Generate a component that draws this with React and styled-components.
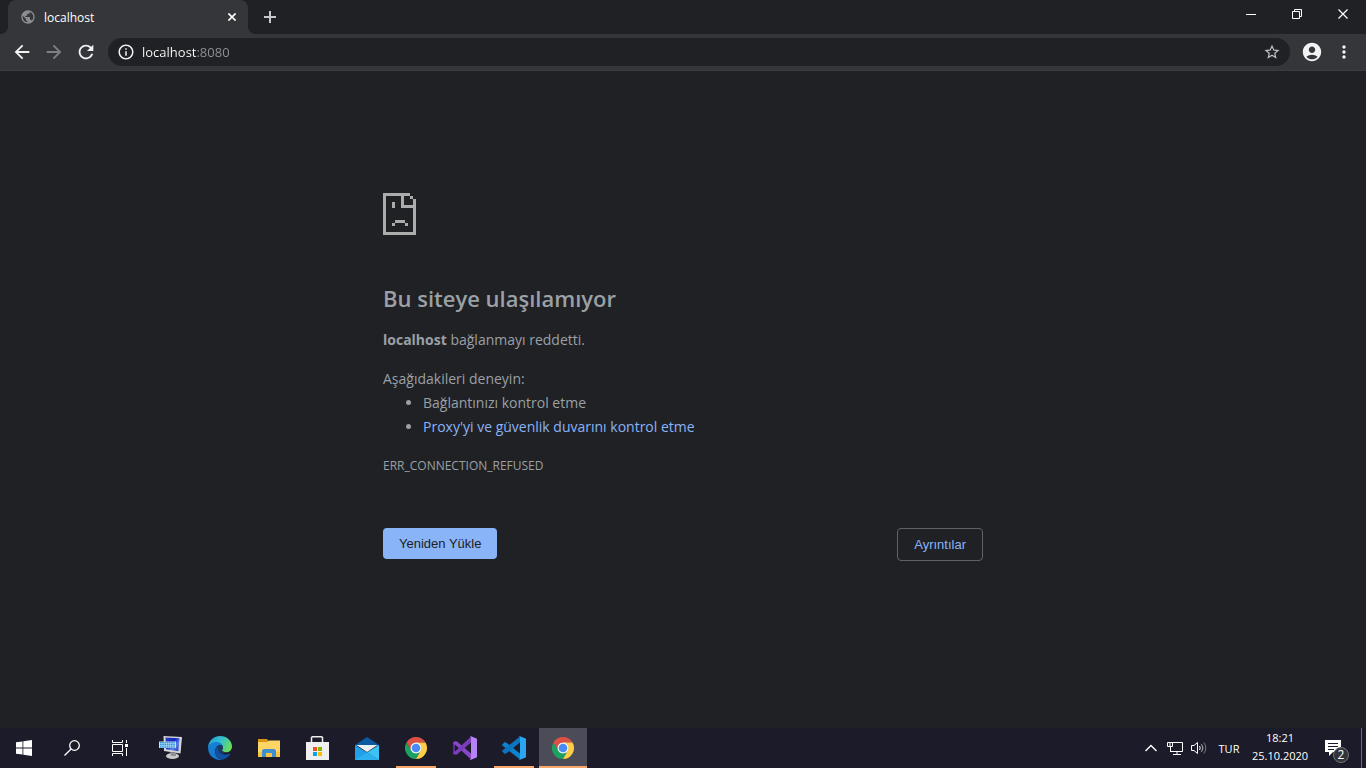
import React, { useState } from 'react'
import styled, { createGlobalStyle, css } from 'styled-components'
import {
  MdArrowBack,
  MdArrowForward,
  MdRefresh,
  MdInfoOutline,
  MdStarBorder,
  MdAccountCircle,
  MdMoreVert,
  MdPublic
} from 'react-icons/md'

const GlobalStyle = createGlobalStyle`
  * {
    box-sizing: border-box;
  }

  body {
    margin: 0;
    background: #202124;
    font-family: "Open Sans", "Noto Sans", sans-serif;
  }

  button,
  input {
    font-family: inherit;
  }
`

const Screen = styled.div`
  display: flex;
  flex-direction: column;
  min-height: 100vh;
`

const plainButton = css`
  display: flex;
  align-items: center;
  justify-content: center;
  padding: 0;
  border: 0;
  background: none;
  color: #fff;
`

/* tab strip */

const TabStrip = styled.header`
  display: flex;
  height: 34px;
  padding-left: 8px;
  background: #202124;
`

const Tab = styled.div`
  position: relative;
  display: flex;
  align-items: center;
  width: 240px;
  padding: 0 8px 0 12px;
  border-radius: 8px 8px 0 0;
  background: #35363a;
  color: #fff;
  font-size: 12px;

  &::before,
  &::after {
    content: "";
    position: absolute;
    bottom: 0;
    width: 8px;
    height: 8px;
  }
  &::before {
    right: 100%;
    background: radial-gradient(circle at 0 0, transparent 8px, #35363a 8px);
  }
  &::after {
    left: 100%;
    background: radial-gradient(circle at 100% 0, transparent 8px, #35363a 8px);
  }
`

const Favicon = styled(MdPublic)`
  width: 16px;
  height: 16px;
  margin-right: 8px;
  color: #8c8d8f;
`

const TabTitle = styled.span`
  flex: 1;
`

const TabClose = styled.button`
  ${plainButton}
  width: 16px;
  height: 16px;
`

const NewTab = styled.button`
  ${plainButton}
  width: 28px;
  margin-left: 8px;
  color: #c6c8cc;
`

const WindowControls = styled.div`
  display: flex;
  height: 28px;
  margin-left: auto;
`

const WindowButton = styled.button`
  ${plainButton}
  width: 46px;
`

/* toolbar */

const Toolbar = styled.nav`
  display: flex;
  align-items: center;
  height: 37px;
  padding: 0 6px;
  border-bottom: 1px solid #3c3d41;
  background: #35363a;
`

const ToolButton = styled.button`
  ${plainButton}
  width: 32px;
  height: 32px;
  color: ${props => props.disabled ? '#7f8083' : '#f1f3f4'};
`

const Omnibox = styled.div`
  display: flex;
  flex: 1;
  align-items: center;
  height: 28px;
  margin: 0 6px;
  padding: 0 8px;
  border-radius: 14px;
  background: #202124;
`

const OmniboxButton = styled.button`
  ${plainButton}
  width: 20px;
  height: 20px;
  color: ${props => props.$muted ? '#bdc1c6' : '#f1f3f4'};
`

// the host part is bright, the port after it is dimmed
const Address = styled.input`
  flex: 1;
  min-width: 0;
  margin-left: 6px;
  padding: 0;
  border: 0;
  outline: 0;
  background: linear-gradient(to right, #fff 55px, #8f9398 55px);
  background-clip: text;
  color: transparent;
  caret-color: #fff;
  font-size: 13px;
  line-height: 20px;
`

/* error page */

const Page = styled.main`
  flex: 1;
  width: 100%;
  max-width: 600px;
  margin: 0 auto;
  padding-top: 122px;
  color: #9aa0a6;
  font-size: 14px;
  line-height: 24px;

  p {
    margin: 0 0 15px;
  }
  ul {
    margin: 0 0 15px;
    padding-left: 40px;
  }
  a {
    color: #8ab4f8;
    text-decoration: none;
  }
`

const Heading = styled.h1`
  margin: 47px 0 14px;
  font-size: 22px;
  font-weight: 600;
  line-height: 32px;
`

const Intro = styled.div`
  color: inherit;
`

const ErrorCode = styled.div`
  font-size: 12px;
`

const Actions = styled.div`
  display: flex;
  align-items: flex-start;
  justify-content: space-between;
  margin-top: 50px;
`

const PageButton = styled.button`
  padding: 8px 16px;
  border: 0;
  border-radius: 4px;
  background: #8ab4f8;
  color: #202124;
  font-family: "Liberation Sans", Arial, sans-serif;
  font-size: 13px;
  line-height: 15px;

  ${props => props.$outlined && css`
    border: 1px solid #5f6368;
    background: transparent;
    color: #8ab4f8;
  `}
`

/* taskbar */

const Taskbar = styled.footer`
  display: flex;
  height: 40px;
  background: #1c1b29;
  color: #fff;
`

const TaskButton = styled.button`
  ${plainButton}
  width: 48px;
`

const Apps = styled.div`
  display: flex;
  gap: 1px;
  margin-left: 3px;
`

const AppButton = styled.button`
  ${plainButton}
  position: relative;
  width: 48px;
  background: ${props => props.$active ? '#4c4c58' : 'none'};

  ${props => props.$running && css`
    &::after {
      content: "";
      position: absolute;
      right: ${props.$active ? 0 : '4px'};
      bottom: 0;
      left: ${props.$active ? 0 : '4px'};
      height: 2px;
      background: #f7a76c;
    }
  `}
`

const Tray = styled.div`
  display: flex;
  margin-left: auto;
`

const TrayButton = styled.button`
  ${plainButton}
  width: 24px;
`

const Language = styled.button`
  ${plainButton}
  width: 36px;
  font-size: 11px;
`

const Clock = styled.button`
  ${plainButton}
  flex-direction: column;
  width: 66px;
  padding-bottom: 2px;
  font-size: 11px;
  line-height: 18px;
`

const Notifications = styled.button`
  ${plainButton}
  position: relative;
  width: 48px;
  padding-right: 8px;
`

const Badge = styled.span`
  position: absolute;
  right: 12px;
  bottom: 5px;
  width: 16px;
  height: 16px;
  border: 1px solid #75757c;
  border-radius: 50%;
  background: #33333a;
  font-size: 12px;
  line-height: 14px;
  text-align: center;
`

const ShowDesktop = styled.button`
  ${plainButton}
  width: 5px;
  border-left: 1px solid #6c6b76;
`

const CloseIcon = ({ size, stroke }) => (
  <svg width={size} height={size} viewBox="0 0 10 10" stroke="currentColor" strokeWidth={stroke}>
    <path d="M.5.5l9 9M9.5.5l-9 9" />
  </svg>
)

const PlusIcon = () => (
  <svg width="12" height="12" viewBox="0 0 12 12" fill="currentColor">
    <path d="M5 0h2v5h5v2H7v5H5V7H0V5h5z" />
  </svg>
)

const MinimizeIcon = () => (
  <svg width="10" height="10" viewBox="0 0 10 10" fill="currentColor">
    <path d="M0 5h10v1H0z" />
  </svg>
)

const RestoreIcon = () => (
  <svg width="10" height="10" viewBox="0 0 10 10" fill="none" stroke="currentColor">
    <path d="M.5 2.5h7v7h-7zM2.5 2.5v-2h7v7h-2" />
  </svg>
)

const SadPageIcon = () => (
  <svg width="33" height="42" viewBox="0 0 33 42" fill="#acacac" shapeRendering="crispEdges" display="block">
    <path d="M0 0h27v3h3v3h3v36H0zM3 3v36h27V15H18V3zM21 3v9h9V6h-3V3z" fillRule="evenodd" />
    <path d="M9 9h3v6H9zM12 27h10v3H12zM9 30h3v3H9zM22 30h3v3h-3z" />
  </svg>
)

const WindowsIcon = () => (
  <svg width="16" height="16" viewBox="0 0 16 16" fill="currentColor">
    <path d="M0 2.3l6.5-.9v6.1H0zM7.3 1.2L16 0v7.5H7.3zM0 8.4h6.5v6.2L0 13.7zM7.3 8.4H16V16l-8.7-1.2z" />
  </svg>
)

const SearchIcon = () => (
  <svg width="16" height="16" viewBox="0 0 16 16" fill="none" stroke="currentColor" strokeWidth="1.3">
    <circle cx="10.5" cy="5.5" r="4.8" />
    <path d="M7.1 9L.5 15.5" />
  </svg>
)

const TaskViewIcon = () => (
  <svg width="16" height="16" viewBox="0 0 16 16" fill="none" stroke="currentColor">
    <path d="M.5 0v2.5h10V0M.5 16v-2.5h10V16M14.5 0v3M14.5 8v8" />
    <path d="M.5 4.5h10v7H.5z" />
    <path d="M13 4h3v3h-3z" fill="currentColor" stroke="none" />
  </svg>
)

const RemoteKeyboardIcon = () => (
  <svg width="24" height="24" viewBox="0 0 24 24">
    <defs>
      <linearGradient id="remoteScreen" x1="0" x2="1" y1="0" y2="1">
        <stop offset="0" stopColor="#2a3fc0" />
        <stop offset=".4" stopColor="#1226c4" />
        <stop offset=".65" stopColor="#5b7fe8" />
        <stop offset="1" stopColor="#1a35b8" />
      </linearGradient>
    </defs>
    <ellipse cx="13.500" cy="20" rx="6.500" ry="3" fill="#c9cbcb" />
    <path d="M11 16l6 1v3h-5z" fill="#8e9294" />
    <path d="M4.500 0L23 1l-1.500 16.500L5 15z" fill="#d3d6d4" />
    <path d="M6.500 1.500l14 .8-1.200 13L7 13.300z" fill="url(#remoteScreen)" />
    <path d="M0 5.500h17v6.500H0z" fill="#bfe2f6" />
    <path d="M1 6.700h15M1 8.800h15M1 10.900h15" stroke="#3a98dc" strokeWidth="1.500" strokeDasharray="1.700 .5" />
  </svg>
)

const EdgeIcon = () => (
  <svg width="24" height="24" viewBox="0 0 24 24">
    <defs>
      <linearGradient id="edgeTop" x1="0" x2="1" y1=".2" y2=".6">
        <stop offset="0" stopColor="#1f9fe0" />
        <stop offset=".5" stopColor="#33c0cc" />
        <stop offset="1" stopColor="#6be055" />
      </linearGradient>
      <linearGradient id="edgeLeft" x1="0" x2=".6" y1="0" y2="1">
        <stop offset="0" stopColor="#1783d4" />
        <stop offset="1" stopColor="#1377cc" />
      </linearGradient>
    </defs>
    <path d="M12 0c7 0 12 5 12 10.500 0 3.500-2.800 5.800-6 5.800-2.700 0-4-1.100-4-2 0-.6.900-.9.900-2.600C14.900 9 12 7.300 8.700 7.300 4.500 7.300 1 9.500.1 12 .1 5.300 5.300 0 12 0z" fill="url(#edgeTop)" />
    <path d="M.1 12C.7 8 4.500 6 8.300 6c4 0 6.600 2.400 6.600 5.200-.3-1.300-1.500-2.100-3-2.100-2.800 0-4.800 3.100-4.800 6.300 0 4.400 3.200 7.900 7.200 8.300C6.500 25.100.1 19.300.1 12z" fill="url(#edgeLeft)" />
    <path d="M11.900 9.100c-2.900 1.200-4.800 3.600-4.800 6.700 0 4.200 3.300 7.700 7.200 7.900 3.200-.6 6.200-2.700 7.900-5.500.3-.5-.2-.9-.7-.6-1.200.6-2.500.9-4.100.9-4 0-7.300-2.700-7.300-6 0-1.500.7-2.700 1.800-3.400z" fill="#1450a0" />
    <path d="M11.900 9.100c1.700 0 2.900 1 3 2.500 0 1.500-.9 2-.9 2.700 0 .9 1.300 2 4 2l-3 1.500c-3-.5-5-2.500-5-5.300 0-1.500.7-2.700 1.900-3.400z" fill="#173a66" />
  </svg>
)

const ExplorerIcon = () => (
  <svg width="22" height="18" viewBox="0 0 22 18">
    <path d="M0 0h9l1.500 2L9 4H0z" fill="#dc9512" />
    <path d="M0 3h9l2-1.500h11V18H0z" fill="#ffd666" />
    <path d="M0 13h22v5H0z" fill="#f7c445" />
    <path d="M4 18v-6.500L5.500 10h11l1.500 1.500V18h-4v-4H8v4z" fill="#3e8fd0" />
  </svg>
)

const StoreIcon = () => (
  <svg width="24" height="24" viewBox="0 0 24 24">
    <path d="M5.500 7V1.500l1-.7h9l1 .7V7" fill="none" stroke="#eee" strokeWidth="1.500" />
    <path d="M0 6h23v18H0z" fill="#efefef" />
    <path d="M7 11h4v4H7z" fill="#f25022" />
    <path d="M12 11h4v4h-4z" fill="#7fba00" />
    <path d="M7 16h4v4H7z" fill="#00a4ef" />
    <path d="M12 16h4v4h-4z" fill="#ffb900" />
  </svg>
)

const MailIcon = () => (
  <svg width="24" height="23" viewBox="0 0 24 23">
    <path d="M0 8L12 0l12 8v1H0z" fill="#0c59a4" />
    <path d="M0 8l24 15H0z" fill="#229fe9" />
    <path d="M24 8v15L12 15.500z" fill="#3cc2f6" />
    <path d="M0 23l12-7.500L24 23z" fill="#2bb0f0" />
    <path d="M1.500 8h21L12 15z" fill="#eef1f3" />
  </svg>
)

const ChromeIcon = () => (
  <svg width="24" height="24" viewBox="0 0 24 24">
    <circle cx="12" cy="12" r="6" fill="#f4f6fa" />
    <path d="M2.470 6.500A11 11 0 0 1 21.530 6.500H12A5.500 5.500 0 0 0 7.240 14.750z" fill="#dd5144" />
    <path d="M2.470 6.500L7.240 14.750A5.500 5.500 0 0 0 16.760 14.750L12 23A11 11 0 0 1 2.470 6.500z" fill="#1ba261" />
    <path d="M21.530 6.500A11 11 0 0 1 12 23L16.760 14.750A5.500 5.500 0 0 0 12 6.500z" fill="#ffcd46" />
    <circle cx="12" cy="12" r="4.300" fill="#4a8af4" />
  </svg>
)

const VisualStudioIcon = () => (
  <svg width="24" height="24" viewBox="0 0 24 24">
    <path d="M0 6.300L2 5.300v13.400l-2-1z" fill="#5c2a96" />
    <path d="M0 6.300L2.500 5.200 4 5.600 18 17.500V23.500L2 8.500v2z" fill="#8a46c9" />
    <path d="M0 17.700l2.500 1.100 1.500-.4L18 6.500V.5L2 15.500v-2z" fill="#7a3cba" />
    <path d="M17.500 0L24 2.800v18.400L17.500 24l-1-.7c1 .3 1.500-.2 1.500-1V1.700c0-.8-.6-1.400-1.500-1z" fill="#b583f3" />
  </svg>
)

const VsCodeIcon = () => (
  <svg width="24" height="24" viewBox="0 0 24 24">
    <path d="M.3 8.500l2.200-2.200h1.300L18 17.500V23.500L.3 9.500z" fill="#0d83cf" />
    <path d="M.3 15.500l2.200 2.200h1.300L18 6.500V.5L.3 14.500z" fill="#0d74bd" />
    <path d="M17.500 0L24 2.800v18.400L17.500 24l-1-.6c1 .4 1.500-.2 1.500-1V1.600c0-.8-.6-1.400-1.500-1z" fill="#2aa5f1" />
  </svg>
)

const ChevronIcon = () => (
  <svg width="12" height="8" viewBox="0 0 12 8" fill="none" stroke="currentColor" strokeWidth="1.400">
    <path d="M.5 7L6 1.500 11.500 7" />
  </svg>
)

const NetworkIcon = () => (
  <svg width="16" height="16" viewBox="0 0 16 16" fill="none" stroke="currentColor">
    <path d="M5 2.500h10.500v9H3.500M3.500 7v5M6 14.500h8M10 12v2.500M.5 2.500h5v4h-5zM3 3v3" />
  </svg>
)

const VolumeIcon = () => (
  <svg width="16" height="14" viewBox="0 0 16 14" fill="none" stroke="currentColor">
    <path d="M.5 4.500h2.500l3.500-3v11L3 9.500H.5z" />
    <path d="M8.500 5q1.500 2 0 4" />
    <path d="M10.500 3.300q3 3.700 0 7.400" opacity=".7" />
    <path d="M12.800 1.500q4 5.500 0 11" opacity=".4" />
  </svg>
)

const MessageIcon = () => (
  <svg width="16" height="16" viewBox="0 0 16 16">
    <path d="M0 0h16v12H8l-4 4v-4H0z" fill="#fff" />
    <path d="M3 3.500h10M3 6.500h10M3 9.500h6" stroke="#1c1b29" />
  </svg>
)

const apps = [
  { name: 'Uzak Klavye', icon: RemoteKeyboardIcon },
  { name: 'Microsoft Edge', icon: EdgeIcon },
  { name: 'Dosya Gezgini', icon: ExplorerIcon },
  { name: 'Microsoft Store', icon: StoreIcon },
  { name: 'Posta', icon: MailIcon },
  { name: 'Google Chrome', icon: ChromeIcon, running: true },
  { name: 'Visual Studio', icon: VisualStudioIcon },
  { name: 'Visual Studio Code', icon: VsCodeIcon, running: true },
  { name: 'localhost - Google Chrome', icon: ChromeIcon, running: true, active: true }
]

const App = () => {
  const [address, setAddress] = useState('localhost:8080')

  return (
    <Screen>
      <GlobalStyle />

      <TabStrip>
        <Tab>
          <Favicon />
          <TabTitle>localhost</TabTitle>
          <TabClose aria-label="Sekmeyi kapat"><CloseIcon size={8} stroke={2} /></TabClose>
        </Tab>
        <NewTab aria-label="Yeni sekme"><PlusIcon /></NewTab>
        <WindowControls>
          <WindowButton aria-label="Simge durumuna küçült"><MinimizeIcon /></WindowButton>
          <WindowButton aria-label="Geri yükle"><RestoreIcon /></WindowButton>
          <WindowButton aria-label="Kapat"><CloseIcon size={10} stroke={1.2} /></WindowButton>
        </WindowControls>
      </TabStrip>

      <Toolbar>
        <ToolButton aria-label="Geri"><MdArrowBack size={22} /></ToolButton>
        <ToolButton aria-label="İleri" disabled><MdArrowForward size={22} /></ToolButton>
        <ToolButton aria-label="Yenile"><MdRefresh size={22} /></ToolButton>
        <Omnibox>
          <OmniboxButton aria-label="Site bilgileri"><MdInfoOutline size={18} /></OmniboxButton>
          <Address
            aria-label="Adres çubuğu"
            value={address}
            spellCheck={false}
            onChange={e => setAddress(e.target.value)} />
          <OmniboxButton $muted aria-label="Yer işareti ekle"><MdStarBorder size={18} /></OmniboxButton>
        </Omnibox>
        <ToolButton aria-label="Profil"><MdAccountCircle size={22} /></ToolButton>
        <ToolButton aria-label="Menü"><MdMoreVert size={20} /></ToolButton>
      </Toolbar>

      <Page>
        <SadPageIcon />
        <Heading>Bu siteye ulaşılamıyor</Heading>
        <p><strong>localhost</strong> bağlanmayı reddetti.</p>
        <Intro>Aşağıdakileri deneyin:</Intro>
        <ul>
          <li>Bağlantınızı kontrol etme</li>
          <li><a href="#buttons">Proxy'yi ve güvenlik duvarını kontrol etme</a></li>
        </ul>
        <ErrorCode>ERR_CONNECTION_REFUSED</ErrorCode>
        <Actions id="buttons">
          <PageButton>Yeniden Yükle</PageButton>
          <PageButton $outlined>Ayrıntılar</PageButton>
        </Actions>
      </Page>

      <Taskbar>
        <TaskButton aria-label="Başlat"><WindowsIcon /></TaskButton>
        <TaskButton aria-label="Ara"><SearchIcon /></TaskButton>
        <TaskButton aria-label="Görev görünümü"><TaskViewIcon /></TaskButton>
        <Apps>
          {apps.map(({ name, icon: Icon, running, active }) => (
            <AppButton key={name} aria-label={name} $running={running} $active={active}>
              <Icon />
            </AppButton>
          ))}
        </Apps>
        <Tray>
          <TrayButton aria-label="Gizli simgeleri göster"><ChevronIcon /></TrayButton>
          <TrayButton aria-label="Ağ"><NetworkIcon /></TrayButton>
          <TrayButton aria-label="Ses"><VolumeIcon /></TrayButton>
          <Language>TUR</Language>
          <Clock>
            <span>18:21</span>
            <span>25.10.2020</span>
          </Clock>
          <Notifications aria-label="2 yeni bildirim">
            <MessageIcon />
            <Badge>2</Badge>
          </Notifications>
          <ShowDesktop aria-label="Masaüstünü göster" />
        </Tray>
      </Taskbar>
    </Screen>
  )
}

export default App
